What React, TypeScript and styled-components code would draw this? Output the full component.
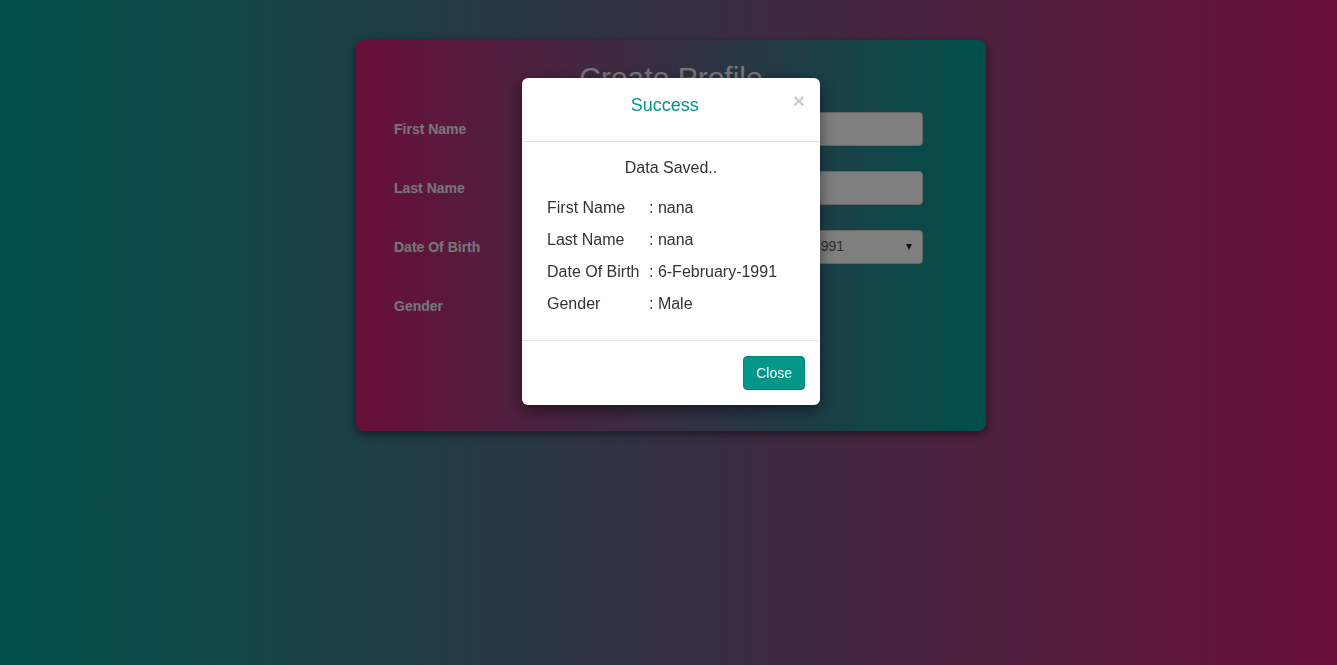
import styled, { createGlobalStyle } from 'styled-components';

const GlobalStyle = createGlobalStyle`
  * {
    box-sizing: border-box;
  }

  html,
  body {
    margin: 0;
    padding: 0;
  }

  body {
    font-family: "Liberation Sans", Arial, Helvetica, sans-serif;
    font-size: 14px;
    line-height: 1.42857;
    color: #333;
  }
`;

const Page = styled.div`
  min-height: 100vh;
  padding: 40px 0 0 5px;
  background: linear-gradient(to right, #00a096, #d41e74);
`;

const Card = styled.form`
  width: 630px;
  margin: 0 auto;
  padding: 21px 63px 51px 38px;
  border-radius: 8px;
  background: linear-gradient(to right, #d41e74, #00a096);
  box-shadow: 0 3px 10px rgba(0, 0, 0, 0.5);
`;

const CardTitle = styled.h2`
  margin: 0 -25px 18px 0;
  font-size: 30px;
  font-weight: 400;
  line-height: 33px;
  text-align: center;
  color: #eee;
`;

const FieldRow = styled.div`
  display: grid;
  grid-template-columns: 160px 1fr;
  align-items: center;
  min-height: 34px;
  margin-bottom: 25px;
`;

const FieldLabel = styled.label`
  padding-top: 1px;
  font-weight: 700;
  font-size: 14px;
  color: #eee;
`;

const TextInput = styled.input`
  height: 34px;
  width: 100%;
  padding: 6px 12px;
  font: inherit;
  border: 1px solid #ccc;
  border-radius: 4px;
  background: #fff;
`;

const DateGroup = styled.div`
  display: grid;
  grid-template-columns: 1fr 1.4fr 123px;
  gap: 10px;
`;

const SelectBox = styled.div`
  display: flex;
  align-items: center;
  justify-content: space-between;
  height: 34px;
  padding: 6px 10px 6px 12px;
  border: 1px solid #ccc;
  border-radius: 4px;
  background: #fff;
  color: #555;
`;

const Caret = styled.span`
  width: 0;
  height: 0;
  border-left: 3.5px solid transparent;
  border-right: 3.5px solid transparent;
  border-top: 6px solid #222;
`;

const RadioGroup = styled.div`
  display: flex;
  gap: 24px;
  color: #eee;
  font-weight: 700;
`;

const SubmitButton = styled.button`
  display: block;
  margin: 0 auto;
  padding: 6px 24px;
  font: inherit;
  color: #fff;
  background: #009688;
  border: 0;
  border-radius: 4px;
`;

const Backdrop = styled.div`
  position: fixed;
  inset: 0;
  display: flex;
  justify-content: center;
  align-items: flex-start;
  padding: 78px 0 0 5px;
  background: rgba(0, 0, 0, 0.5);
`;

const Modal = styled.div`
  width: 298px;
  background: #fff;
  border-radius: 6px;
  box-shadow: 0 5px 15px rgba(0, 0, 0, 0.5);
`;

const ModalHeader = styled.div`
  display: flex;
  align-items: flex-start;
  padding: 14px 15px 23px;
  border-bottom: 1px solid #e5e5e5;
`;

const ModalTitle = styled.h4`
  flex: 1;
  margin: 0;
  font-size: 18px;
  font-weight: 400;
  line-height: 26px;
  text-align: center;
  color: #009688;
`;

const CloseX = styled.button`
  padding: 0;
  margin-top: -2px;
  border: 0;
  background: none;
  font: 700 21px/1 "Liberation Sans", Arial, sans-serif;
  color: #000;
  opacity: 0.2;
`;

const ModalBody = styled.div`
  padding: 15px 25px 20px;
  font-size: 16px;
`;

const SavedText = styled.p`
  margin: 0 0 13px;
  line-height: 22px;
  text-align: center;
`;

const DetailRow = styled.div`
  display: grid;
  grid-template-columns: 102px 1fr;
  line-height: 32px;
`;

const ModalFooter = styled.div`
  display: flex;
  justify-content: flex-end;
  padding: 15px;
  border-top: 1px solid #e5e5e5;
`;

const ModalButton = styled.button`
  height: 34px;
  padding: 6px 12px;
  font: 14px "Liberation Sans", Arial, sans-serif;
  color: #fff;
  background: #009688;
  border: 1px solid #00897b;
  border-radius: 4px;
`;

const details = [
  { label: 'First Name', value: 'nana' },
  { label: 'Last Name', value: 'nana' },
  { label: 'Date Of Birth', value: '6-February-1991' },
  { label: 'Gender', value: 'Male' },
];

export default function App() {
  return (
    <>
      <GlobalStyle />
      <Page>
        <Card onSubmit={(e) => e.preventDefault()}>
          <CardTitle>Create Profile</CardTitle>
          <FieldRow>
            <FieldLabel htmlFor="first">First Name</FieldLabel>
            <TextInput id="first" defaultValue="nana" />
          </FieldRow>
          <FieldRow>
            <FieldLabel htmlFor="last">Last Name</FieldLabel>
            <TextInput id="last" defaultValue="nana" />
          </FieldRow>
          <FieldRow>
            <FieldLabel>Date Of Birth</FieldLabel>
            <DateGroup>
              <SelectBox>
                6 <Caret />
              </SelectBox>
              <SelectBox>
                February <Caret />
              </SelectBox>
              <SelectBox>
                1991 <Caret />
              </SelectBox>
            </DateGroup>
          </FieldRow>
          <FieldRow>
            <FieldLabel>Gender</FieldLabel>
            <RadioGroup>
              <label>
                <input type="radio" name="gender" defaultChecked /> Male
              </label>
              <label>
                <input type="radio" name="gender" /> Female
              </label>
            </RadioGroup>
          </FieldRow>
          <SubmitButton type="submit">Submit</SubmitButton>
        </Card>
      </Page>
      <Backdrop>
        <Modal>
          <ModalHeader>
            <ModalTitle>Success</ModalTitle>
            <CloseX aria-label="Close">×</CloseX>
          </ModalHeader>
          <ModalBody>
            <SavedText>Data Saved..</SavedText>
            {details.map((d) => (
              <DetailRow key={d.label}>
                <span>{d.label}</span>
                <span>: {d.value}</span>
              </DetailRow>
            ))}
          </ModalBody>
          <ModalFooter>
            <ModalButton>Close</ModalButton>
          </ModalFooter>
        </Modal>
      </Backdrop>
    </>
  );
}
